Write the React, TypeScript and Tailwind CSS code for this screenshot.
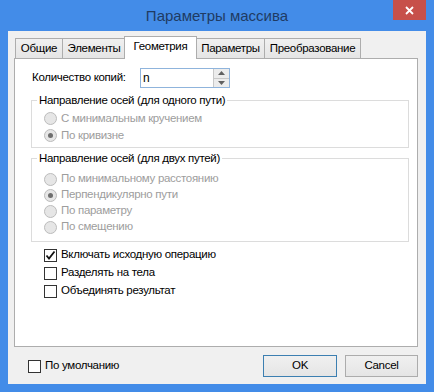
import React from "react";

const font = { fontFamily: '"Liberation Sans", Arial, sans-serif' };

function Radio({ label, checked }: { label: string; checked?: boolean }) {
  return (
    <div className="flex items-center h-full">
      <span className="w-[13px] h-[13px] rounded-full border border-[#bcbcbc] bg-[#e6e6e6] flex items-center justify-center shrink-0">
        {checked && <span className="w-[5px] h-[5px] rounded-full bg-[#6f6f6f]" />}
      </span>
      <span className="ml-[4px] text-[11.5px] tracking-[-0.3px] text-[#9d9d9d] leading-none">{label}</span>
    </div>
  );
}

function Check({ label, checked }: { label: string; checked?: boolean }) {
  return (
    <div className="flex items-center h-full">
      <span className="w-[13px] h-[13px] border border-[#333333] bg-white flex items-center justify-center shrink-0">
        {checked && (
          <svg width="11" height="11" viewBox="0 0 11 11">
            <path d="M1.5 5.5 L4 8.5 L9.5 1.5" fill="none" stroke="#111" strokeWidth="1.8" />
          </svg>
        )}
      </span>
      <span className="ml-[4px] text-[11.5px] tracking-[-0.3px] text-black leading-none">{label}</span>
    </div>
  );
}

function Tab({ label, w, selected, first }: { label: string; w: string; selected?: boolean; first?: boolean }) {
  if (selected) {
    return (
      <div
        className={`relative z-10 -ml-[2px] -mb-px h-[23px] ${w} bg-white border border-b-0 border-[#adadad] flex items-center justify-center text-[11.5px] tracking-[-0.3px] text-black pb-[2px]`}
      >
        {label}
      </div>
    );
  }
  return (
    <div
      className={`${first ? "" : "-ml-px"} h-[20px] ${w} bg-gradient-to-b from-[#f0f0f0] to-[#e5e5e5] border border-b-0 border-[#adadad] flex items-center justify-center text-[11.5px] tracking-[-0.3px] text-black`}
    >
      {label}
    </div>
  );
}

export default function App() {
  return (
    <div className="w-[434px] h-[392px] bg-[#438ce8] flex flex-col" style={font}>
      <div className="relative h-[31px] flex items-center justify-center shrink-0">
        <span className="text-[15px] text-[#1f3b63] mt-[2px]">Параметры массива</span>
        <div className="absolute right-[8px] top-0 w-[33px] h-[20px] bg-[#c7504a] flex items-center justify-center">
          <svg width="9" height="9" viewBox="0 0 9 9">
            <path d="M1 1 L8 8 M8 1 L1 8" stroke="white" strokeWidth="1.8" />
          </svg>
        </div>
      </div>
      <div className="mx-[8px] h-[353px] bg-[#f0f0f0] flex flex-col">
        <div className="h-[27px] pt-[5px] pl-[7px] flex items-end">
          <Tab label="Общие" w="w-[48px]" first />
          <Tab label="Элементы" w="w-[64px]" />
          <Tab label="Геометрия" w="w-[73px]" selected />
          <Tab label="Параметры" w="w-[69px]" />
          <Tab label="Преобразование" w="w-[97px]" />
        </div>
        <div className="ml-[6px] mr-[8px] h-[289px] bg-white border border-[#adadad] flex flex-col">
          <div className="mt-[9px] h-[20px] flex items-center pl-[17px]">
            <span className="w-[108px] text-[11.5px] tracking-[-0.3px] text-black">Количество копий:</span>
            <div className="w-[90px] h-[20px] border border-[#8fb4dc] flex">
              <span className="flex-1 pl-[2px] text-[12px] leading-[18px] text-black">n</span>
              <div className="w-[16px] h-full border-l border-[#c8c8c8] bg-[#ececec] flex flex-col">
                <div className="flex-1 flex items-center justify-center border-b border-[#c8c8c8]">
                  <svg width="7" height="4" viewBox="0 0 7 4">
                    <path d="M0 4 L3.5 0 L7 4 Z" fill="#606060" />
                  </svg>
                </div>
                <div className="flex-1 flex items-center justify-center">
                  <svg width="7" height="4" viewBox="0 0 7 4">
                    <path d="M0 0 L3.5 4 L7 0 Z" fill="#606060" />
                  </svg>
                </div>
              </div>
            </div>
          </div>

          <div className="relative mt-[12px] ml-[16px] mr-[8px] h-[48px] border border-[#dcdcdc] pt-[9px] pl-[12px]">
            <span className="absolute -top-[8px] left-[5px] px-[2px] bg-white text-[11.5px] tracking-[-0.3px] leading-[14px] text-black">
              Направление осей (для одного пути)
            </span>
            <div className="h-[17px]">
              <Radio label="С минимальным кручением" />
            </div>
            <div className="h-[17px]">
              <Radio label="По кривизне" checked />
            </div>
          </div>

          <div className="relative mt-[10px] ml-[16px] mr-[8px] h-[84px] border border-[#dcdcdc] pt-[12px] pl-[12px]">
            <span className="absolute -top-[8px] left-[5px] px-[2px] bg-white text-[11.5px] tracking-[-0.3px] leading-[14px] text-black">
              Направление осей (для двух путей)
            </span>
            <div className="h-[16px]">
              <Radio label="По минимальному расстоянию" />
            </div>
            <div className="h-[16px]">
              <Radio label="Перпендикулярно пути" checked />
            </div>
            <div className="h-[16px]">
              <Radio label="По параметру" />
            </div>
            <div className="h-[16px]">
              <Radio label="По смещению" />
            </div>
          </div>

          <div className="mt-[4px] pl-[29px] flex flex-col">
            <div className="h-[18px]">
              <Check label="Включать исходную операцию" checked />
            </div>
            <div className="h-[18px]">
              <Check label="Разделять на тела" />
            </div>
            <div className="h-[18px]">
              <Check label="Объединять результат" />
            </div>
          </div>
        </div>
        <div className="flex-1 flex items-start pt-[8px] pl-[20px] pr-[8px]">
          <div className="h-[22px] flex items-center">
            <Check label="По умолчанию" />
          </div>
          <div className="flex-1" />
          <button className="w-[74px] h-[22px] border border-[#3c7fb1] bg-gradient-to-b from-[#f0f0f0] to-[#e5e5e5] text-[11.5px] tracking-[-0.3px] text-black">
            OK
          </button>
          <button className="ml-[8px] w-[73px] h-[22px] border border-[#acacac] bg-gradient-to-b from-[#f0f0f0] to-[#e5e5e5] text-[11.5px] tracking-[-0.3px] text-black">
            Cancel
          </button>
        </div>
      </div>
    </div>
  );
}
